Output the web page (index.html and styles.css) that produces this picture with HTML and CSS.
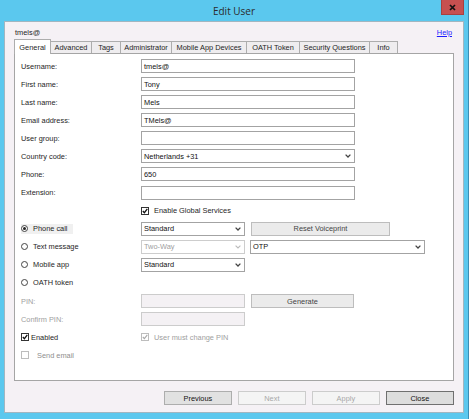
FILE: index.html
```html
<!DOCTYPE html>
<html>
<head>
<meta charset="utf-8">
<link rel="stylesheet" href="styles.css">
</head>
<body>
<div class="window">
  <div class="titlebar">
    <div class="title">Edit User</div>
    <div class="close"><svg width="7" height="7" viewBox="0 0 7 7"><path d="M1 1 L6 6 M6 1 L1 6" stroke="#111" stroke-width="1.7"/></svg></div>
  </div>
  <div class="client">
    <div class="header">
      <span class="user">tmels@</span>
      <span class="help">Help</span>
    </div>
    <div class="tabs">
      <div class="tab active">General</div>
      <div class="tab">Advanced</div>
      <div class="tab">Tags</div>
      <div class="tab">Administrator</div>
      <div class="tab">Mobile App Devices</div>
      <div class="tab">OATH Token</div>
      <div class="tab">Security Questions</div>
      <div class="tab">Info</div>
    </div>
    <div class="panel">
      <div class="form">
        <div class="row"><span class="lbl">Username:</span><div class="field">tmels@</div></div>
        <div class="row"><span class="lbl">First name:</span><div class="field">Tony</div></div>
        <div class="row"><span class="lbl">Last name:</span><div class="field">Mels</div></div>
        <div class="row"><span class="lbl">Email address:</span><div class="field">TMels@</div></div>
        <div class="row"><span class="lbl">User group:</span><div class="field"></div></div>
        <div class="row"><span class="lbl">Country code:</span><div class="field select"><span>Netherlands +31</span><svg class="chev" width="6" height="4" viewBox="0 0 6 4"><path d="M0.6 0.6 L3 3 L5.4 0.6" fill="none" stroke="#444" stroke-width="1.3"/></svg></div></div>
        <div class="row"><span class="lbl">Phone:</span><div class="field">650</div></div>
        <div class="row"><span class="lbl">Extension:</span><div class="field"></div></div>
        <div class="row"><span class="lbl"></span><span class="check"><span class="cb"><svg width="6" height="6" viewBox="0 0 6 6"><path d="M0.8 3 L2.4 4.7 L5.3 0.9" fill="none" stroke="#111" stroke-width="1.3"/></svg></span>Enable Global Services</span></div>
        <div class="row">
          <span class="lbl"><span class="radio focus"><span class="dot on"></span>Phone call</span></span>
          <div class="field select sm"><span>Standard</span><svg class="chev" width="6" height="4" viewBox="0 0 6 4"><path d="M0.6 0.6 L3 3 L5.4 0.6" fill="none" stroke="#444" stroke-width="1.3"/></svg></div>
          <div class="btn light wide">Reset Voiceprint</div>
        </div>
        <div class="row">
          <span class="lbl"><span class="radio"><span class="dot"></span>Text message</span></span>
          <div class="field select sm disabled"><span>Two-Way</span><svg class="chev" width="6" height="4" viewBox="0 0 6 4"><path d="M0.6 0.6 L3 3 L5.4 0.6" fill="none" stroke="#bbb" stroke-width="1.1"/></svg></div>
          <div class="field select otp"><span>OTP</span><svg class="chev" width="6" height="4" viewBox="0 0 6 4"><path d="M0.6 0.6 L3 3 L5.4 0.6" fill="none" stroke="#444" stroke-width="1.3"/></svg></div>
        </div>
        <div class="row">
          <span class="lbl"><span class="radio"><span class="dot"></span>Mobile app</span></span>
          <div class="field select sm"><span>Standard</span><svg class="chev" width="6" height="4" viewBox="0 0 6 4"><path d="M0.6 0.6 L3 3 L5.4 0.6" fill="none" stroke="#444" stroke-width="1.3"/></svg></div>
        </div>
        <div class="row"><span class="lbl"><span class="radio"><span class="dot"></span>OATH token</span></span></div>
        <div class="row">
          <span class="lbl dim">PIN:</span>
          <div class="field sm off"></div>
          <div class="btn light gen">Generate</div>
        </div>
        <div class="row">
          <span class="lbl dim">Confirm PIN:</span>
          <div class="field sm off"></div>
        </div>
        <div class="row">
          <span class="lbl"><span class="check tight"><span class="cb"><svg width="6" height="6" viewBox="0 0 6 6"><path d="M0.8 3 L2.4 4.7 L5.3 0.9" fill="none" stroke="#111" stroke-width="1.3"/></svg></span>Enabled</span></span>
          <span class="check dim"><span class="cb off"><svg width="6" height="6" viewBox="0 0 6 6"><path d="M0.8 3 L2.4 4.7 L5.3 0.9" fill="none" stroke="#aaa" stroke-width="1.1"/></svg></span>User must change PIN</span>
        </div>
        <div class="row">
          <span class="lbl"><span class="check loose dim2"><span class="cb off"></span>Send email</span></span>
        </div>
      </div>
    </div>
    <div class="actions">
      <div class="btn">Previous</div>
      <div class="btn disabled">Next</div>
      <div class="btn disabled">Apply</div>
      <div class="btn default">Close</div>
    </div>
  </div>
</div>
</body>
</html>
```
FILE: styles.css
```css
html, body {
  margin: 0;
  padding: 0;
}

.window {
  width: 469px;
  height: 419px;
  box-sizing: border-box;
  background: #5bc8ee;
  border-right: 1px solid #3b8fb5;
  padding: 0 4px 6px 4px;
  display: flex;
  flex-direction: column;
  font-family: "Liberation Sans", Arial, sans-serif;
  font-size: 7.4px;
  color: #1e1e1e;
}

.titlebar {
  height: 21px;
  flex: none;
  display: grid;
  grid-template-columns: 1fr auto 1fr;
  align-items: start;
}

.title {
  grid-column: 2;
  font-family: "Open Sans", "Noto Sans", sans-serif;
  font-size: 10px;
  line-height: 21px;
  padding-top: 1px;
  color: #2b2b2b;
}

.close {
  grid-column: 3;
  justify-self: end;
  width: 23px;
  height: 15px;
  box-sizing: border-box;
  background: #c75050;
  border: 1px solid #a94040;
  border-top: none;
  display: flex;
  align-items: center;
  justify-content: center;
}

.client {
  flex: 1;
  background: #f5f1f5;
  border: 1px solid #a2b6c0;
  padding: 0 9px 7px 9px;
  display: flex;
  flex-direction: column;
  min-height: 0;
}

.header {
  height: 17px;
  flex: none;
  box-sizing: border-box;
  padding: 6px 2px 0 1px;
  line-height: 9px;
  display: flex;
  justify-content: space-between;
}

.help {
  color: #1a1aff;
  text-decoration: underline;
}

.tabs {
  height: 14px;
  flex: none;
  display: grid;
  grid-template-columns: 37px 41px 29px 51px 75px 53px 70px 28px;
  align-items: end;
  position: relative;
  z-index: 1;
}

.tab {
  height: 12px;
  box-sizing: border-box;
  border-top: 1px solid #adadad;
  border-right: 1px solid #adadad;
  background: #efedef;
  display: flex;
  align-items: center;
  justify-content: center;
  white-space: nowrap;
}

.tab:first-child {
  border-left: 1px solid #adadad;
}

.tab.active {
  height: 15px;
  margin-bottom: -1px;
  background: #fff;
}

.panel {
  flex: 1;
  background: #fff;
  border: 1px solid #a5a5a5;
  padding: 5px 0 0 6px;
}

.form {
  display: grid;
  grid-auto-rows: 14px;
  row-gap: 4.09px;
}

.row {
  display: flex;
  align-items: center;
}

.lbl {
  width: 120px;
  flex: none;
  display: flex;
  align-items: center;
}

.dim {
  color: #a0a0a0;
}

.dim2 {
  color: #8e8e8e;
}

.field {
  width: 214px;
  height: 14px;
  box-sizing: border-box;
  border: 1px solid #a3a3a3;
  background: #fff;
  padding: 0 2px;
  display: flex;
  align-items: center;
  color: #111;
  white-space: nowrap;
}

.field.select {
  justify-content: space-between;
  padding-right: 3px;
}

.field.sm {
  width: 104px;
}

.field.otp {
  width: 175px;
  margin-left: 5px;
}

.field.disabled {
  border-color: #cdcdcd;
  color: #a0a0a0;
}

.field.off {
  background: #f4f1f4;
  border-color: #cccccc;
}

.chev {
  flex: none;
}

.btn {
  width: 68.3px;
  height: 14px;
  box-sizing: border-box;
  border: 1px solid #adadad;
  background: #e1e1e1;
  display: flex;
  align-items: center;
  justify-content: center;
  color: #111;
}

.btn.light {
  background: #ebebeb;
  border-color: #bdbdbd;
  color: #444;
  margin-left: 6px;
}

.btn.wide {
  width: 139px;
}

.btn.gen {
  width: 103px;
}

.btn.disabled {
  background: #f4f4f4;
  border-color: #cccccc;
  color: #a8a8a8;
}

.btn.default {
  border-color: #707070;
  background: #dddddd;
}

.radio {
  display: flex;
  align-items: center;
  gap: 5px;
  height: 10px;
}

.radio.focus {
  background: #f0f0f0;
  width: 52px;
}

.dot {
  width: 7px;
  height: 7px;
  box-sizing: border-box;
  border: 1px solid #444;
  border-radius: 50%;
  background: #fff;
  display: flex;
  align-items: center;
  justify-content: center;
}

.dot.on::after {
  content: "";
  width: 3px;
  height: 3px;
  border-radius: 50%;
  background: #222;
}

.check {
  display: flex;
  align-items: center;
  gap: 5px;
}

.check.tight {
  gap: 2px;
}

.check.loose {
  gap: 8px;
}

.cb {
  width: 8px;
  height: 8px;
  box-sizing: border-box;
  border: 1px solid #333;
  background: #fff;
  display: flex;
  align-items: center;
  justify-content: center;
}

.cb.off {
  border-color: #bdbdbd;
}

.actions {
  height: 14px;
  flex: none;
  margin-top: 10px;
  display: flex;
  justify-content: flex-end;
  gap: 5.7px;
}
```
